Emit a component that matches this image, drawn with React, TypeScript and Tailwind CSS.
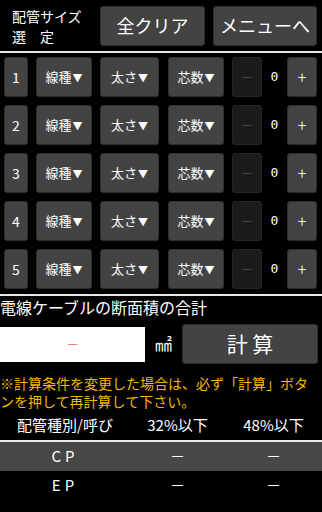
import React from "react";

const jp = { fontFamily: '"Noto Sans CJK JP", "Noto Sans", sans-serif' };

const btn =
  "flex items-center justify-center rounded-[3px] bg-[#434343] border border-[#2e2e2e] text-white";

const Arrow = () => <span className="text-[10px] ml-[1px]">▼</span>;

const Row = ({ n }: { n: number }) => (
  <div className="flex items-center h-[40px] pl-[4px]">
    <div className={`${btn} w-[24px] h-[40px] text-[14px]`}>{n}</div>
    <div className={`${btn} ml-[8px] w-[56px] h-[40px] text-[13px]`}>
      線種<Arrow />
    </div>
    <div className={`${btn} ml-[8px] w-[59px] h-[40px] text-[13px]`}>
      太さ<Arrow />
    </div>
    <div className={`${btn} ml-[9px] w-[56px] h-[40px] text-[13px]`}>
      芯数<Arrow />
    </div>
    <div className="ml-[8px] w-[30px] h-[40px] flex items-center justify-center rounded-[3px] bg-[#1b1b1b] border border-[#262626] text-[#444] text-[13px]">
      －
    </div>
    <div
      className="w-[25px] text-center text-white text-[13px]"
      style={{ fontFamily: '"DejaVu Sans Mono", monospace' }}
    >
      0
    </div>
    <div className={`${btn} w-[30px] h-[40px] text-[17px] font-light`}>+</div>
  </div>
);

const App = () => {
  return (
    <div className="w-[322px] h-[512px] bg-black text-white overflow-hidden" style={jp}>
      {/* header */}
      <div className="flex items-center h-[51px]">
        <div className="w-[100px] pl-[12px] text-[14px] leading-[20px]">
          <div>配管サイズ</div>
          <div>選　定</div>
        </div>
        <div className={`${btn} w-[105px] h-[40px] text-[18px]`}>全クリア</div>
        <div className={`${btn} ml-[8px] w-[104px] h-[40px] text-[18px]`}>メニューへ</div>
      </div>
      <div className="h-[2px] bg-[#e8e8e8]" />

      <div className="flex flex-col gap-[8px] pt-[4px] pb-[5px]">
        {[1, 2, 3, 4, 5].map((n) => (
          <Row key={n} n={n} />
        ))}
      </div>
      <div className="h-[2px] bg-[#e8e8e8]" />

      <div className="h-[24px] text-[16px] leading-[22px]">電線ケーブルの断面積の合計</div>

      <div className="flex items-center h-[48px]">
        <div className="w-[145px] h-[35px] bg-white flex items-center justify-center text-[#ef8080] text-[13px]">
          －
        </div>
        <div className="w-[37px] text-center text-[17px]">㎟</div>
        <div className={`${btn} w-[136px] h-[40px] text-[21px]`}>計 算</div>
      </div>

      <div className="pt-[6px] text-[14px] leading-[18px] text-[#f5b800]">
        ※計算条件を変更した場合は、必ず「計算」ボタ
        <br />
        ンを押して再計算して下さい。
      </div>

      <div className="flex items-center h-[30px] text-[15px]">
        <div className="w-[130px] text-center">配管種別/呼び</div>
        <div className="w-[95px] text-center">32%以下</div>
        <div className="w-[97px] text-center">48%以下</div>
      </div>
      <div className="h-[2px] bg-[#e8e8e8]" />
      <div className="flex items-center h-[29px] bg-[#474747] text-[15px]">
        <div className="w-[130px] text-center tracking-[4px]">CP</div>
        <div className="w-[95px] text-center">－</div>
        <div className="w-[97px] text-center">－</div>
      </div>
      <div className="flex items-center h-[29px] text-[15px]">
        <div className="w-[130px] text-center tracking-[4px]">EP</div>
        <div className="w-[95px] text-center">－</div>
        <div className="w-[97px] text-center">－</div>
      </div>
    </div>
  );
};

export default App;
